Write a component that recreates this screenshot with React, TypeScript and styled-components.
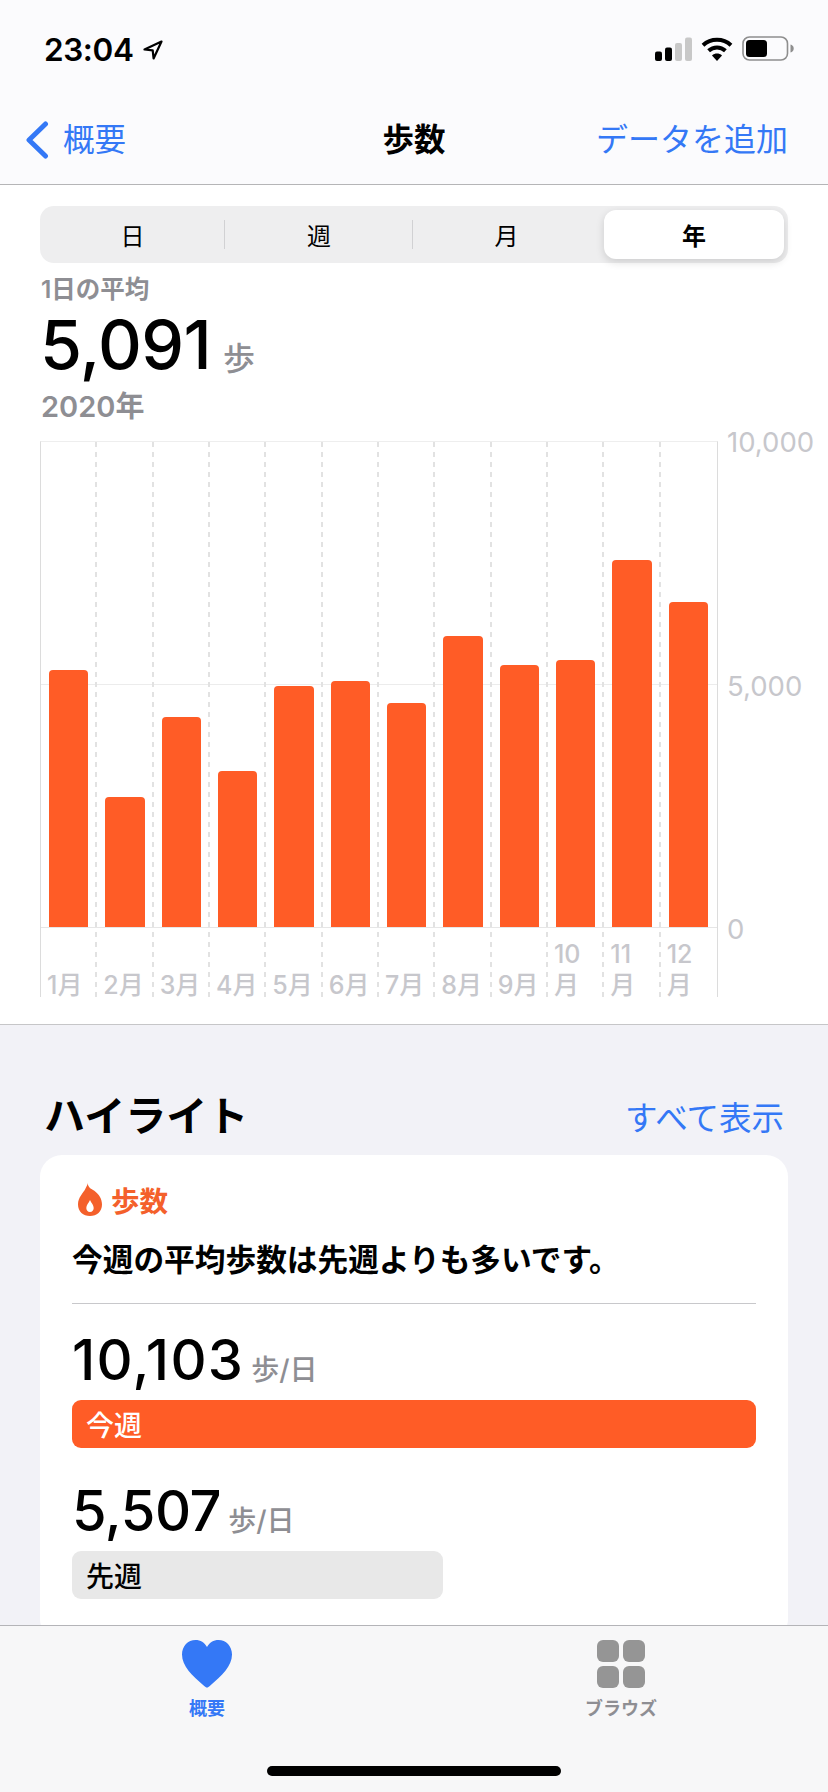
import React from "react";
import styled, { createGlobalStyle } from "styled-components";

const GlobalStyle = createGlobalStyle`
  html, body {
    margin: 0;
    padding: 0;
    background: #f2f2f7;
  }
  * {
    box-sizing: border-box;
  }
`;

const Page = styled.div`
  width: 828px;
  height: 1792px;
  display: flex;
  flex-direction: column;
  overflow: hidden;
  background: #f2f2f7;
  font-family: Inter, "Noto Sans CJK JP", sans-serif;
  color: #000;
`;

/* header */

const Header = styled.header`
  flex: none;
  height: 185px;
  background: #fbfbfd;
  border-bottom: 1px solid #b5b5b7;
`;

const StatusBar = styled.div`
  height: 100px;
  padding: 36px 34px 0 44px;
  display: flex;
  justify-content: space-between;
  align-items: flex-start;
`;

const TimeGroup = styled.div`
  display: flex;
  align-items: center;
  gap: 10px;
`;

const Time = styled.span`
  font-family: Inter, sans-serif;
  font-size: 31.5px;
  line-height: 27px;
  font-weight: 600;
  letter-spacing: -0.4px;
`;

const StatusIcons = styled.div`
  display: flex;
  align-items: center;
  gap: 9px;
`;

const NavBar = styled.nav`
  height: 84px;
  padding: 0 25px 4px;
  display: grid;
  grid-template-columns: 1fr auto 1fr;
  align-items: center;
  font-size: 31.5px;
  line-height: 44px;
`;

const BackLink = styled.div`
  display: flex;
  align-items: center;
  gap: 14px;
  color: #3478f6;
`;

const NavTitle = styled.div`
  font-weight: 700;
`;

const NavAction = styled.div`
  color: #3478f6;
  justify-self: end;
  margin-right: 15px;
  font-size: 32px;
`;

/* chart section */

const ChartSection = styled.section`
  flex: none;
  height: 840px;
  padding: 21px 0 0 40px;
  background: #fff;
  border-bottom: 1px solid #c6c6c8;
`;

const Segmented = styled.div`
  width: 748px;
  height: 57px;
  padding: 4px 4px 4px 0;
  display: grid;
  grid-template-columns: 185px 188px 187px 184px;
  background: #eeeeef;
  border-radius: 14px;
`;

const Segment = styled.div<{ $active?: boolean; $divider?: boolean }>`
  display: flex;
  align-items: center;
  justify-content: center;
  margin-left: ${(p) => (p.$active ? "4px" : "0")};
  font-size: 24px;
  font-weight: ${(p) => (p.$active ? 700 : 400)};
  background: ${(p) => (p.$active ? "#fff" : "transparent")};
  border-radius: 12px;
  box-shadow: ${(p) => (p.$active ? "0 3px 8px rgba(0, 0, 0, 0.14)" : "none")};
  position: relative;
  ${(p) =>
    p.$divider &&
    `
    &::after {
      content: "";
      position: absolute;
      right: 0;
      top: 10px;
      bottom: 10px;
      width: 1px;
      background: #d1d1d3;
    }
  `}
`;

const CaptionLabel = styled.div`
  margin: 12px 0 0 1px;
  font-size: 24.5px;
  line-height: 28px;
  font-weight: 600;
  color: #8e8e93;
`;

const AverageRow = styled.div`
  margin: 3px 0 0 0;
  height: 76px;
  display: flex;
  align-items: flex-end;
  gap: 12px;
`;

const AverageValue = styled.span`
  font-size: 68px;
  line-height: 76px;
  font-weight: 500;
  letter-spacing: -0.6px;
`;

const AverageUnit = styled.span`
  font-size: 32px;
  line-height: 46px;
  font-weight: 500;
  color: #8e8e93;
`;

const YearLabel = styled.div`
  margin: 8px 0 0 1px;
  font-size: 29px;
  line-height: 34px;
  font-weight: 600;
  color: #8e8e93;
`;

const ChartRow = styled.div`
  margin-top: 17px;
  display: flex;
`;

const Plot = styled.div`
  position: relative;
  width: 678px;
  height: 556px;
  display: grid;
  grid-template-columns: repeat(12, 1fr);
  border-left: 1px solid #dcdcdc;
  border-right: 1px solid #dcdcdc;
  border-top: 1px solid #eee;
`;

const MidLine = styled.div`
  position: absolute;
  left: 0;
  right: 0;
  top: 242px;
  height: 1px;
  background: #ececec;
`;

const Column = styled.div<{ $last?: boolean }>`
  position: relative;
  display: flex;
  flex-direction: column;
  background-image: ${(p) =>
    p.$last ? "none" : "repeating-linear-gradient(#e2e2e2 0 5px, transparent 5px 10px)"};
  background-size: 2px 100%;
  background-repeat: no-repeat;
  background-position: right top;
`;

const BarSlot = styled.div`
  height: 486px;
  padding: 0 9px 0 8px;
  display: flex;
  align-items: flex-end;
  border-bottom: 1px solid #e6e6e6;
`;

const Bar = styled.div`
  width: 100%;
  background: #ff5c26;
  border-radius: 4px 4px 0 0;
`;

const MonthSlot = styled.div`
  flex: 1;
  min-height: 0;
  padding: 0 6px;
  display: flex;
  align-items: flex-end;
  font-size: 25px;
  line-height: 31px;
  font-weight: 500;
  color: #c7c7cc;
`;

const MonthLabel = styled.span`
  margin-bottom: -4px;
`;

const Axis = styled.div`
  height: 513px;
  margin: -12px 0 0 9px;
  display: flex;
  flex-direction: column;
  justify-content: space-between;
  font-size: 27.5px;
  line-height: 26px;
  color: #c7c7cc;
`;

/* highlights */

const Scroller = styled.div`
  flex: 1;
  min-height: 0;
  overflow: hidden;
  padding: 0 40px;
`;

const HighlightHead = styled.div`
  height: 130px;
  padding: 0 4px 14px 4px;
  display: flex;
  justify-content: space-between;
  align-items: flex-end;
`;

const HighlightTitle = styled.h2`
  margin: 0;
  font-size: 41px;
  line-height: 50px;
  font-weight: 700;
`;

const ShowAll = styled.div`
  font-size: 32.5px;
  line-height: 44px;
  color: #3478f6;
`;

const Card = styled.div`
  height: 486px;
  padding: 26px 32px 0;
  background: #fff;
  border-radius: 22px;
`;

const CardTag = styled.div`
  display: flex;
  align-items: center;
  gap: 9px;
  height: 36px;
  margin-left: 6px;
  font-size: 28.5px;
  font-weight: 700;
  color: #f4602b;
`;

const CardText = styled.div`
  margin-top: 20px;
  font-size: 30.7px;
  line-height: 46px;
  font-weight: 700;
`;

const Divider = styled.div`
  height: 1px;
  margin-top: 20px;
  background: #c8c8cb;
`;

const Metric = styled.div<{ $top: number }>`
  display: flex;
  align-items: flex-end;
  gap: 7px;
  height: 58px;
  margin-top: ${(p) => p.$top}px;
`;

const MetricValue = styled.span<{ $spacing: number }>`
  font-size: 56px;
  line-height: 58px;
  font-weight: 500;
  letter-spacing: ${(p) => p.$spacing}px;
`;

const MetricUnit = styled.span`
  font-size: 28px;
  line-height: 38px;
  font-weight: 500;
  color: #8e8e93;
`;

const WeekBar = styled.div<{ $current?: boolean }>`
  height: 48px;
  margin-top: 11px;
  padding-left: 14px;
  display: flex;
  align-items: center;
  font-size: 28px;
  font-weight: 500;
  border-radius: 9px;
  background: ${(p) => (p.$current ? "#ff5c26" : "#e8e8e8")};
  color: ${(p) => (p.$current ? "#fff" : "#000")};
  width: ${(p) => (p.$current ? "100%" : "371px")};
`;

/* tab bar */

const TabBar = styled.footer`
  flex: none;
  height: 167px;
  position: relative;
  display: grid;
  grid-template-columns: 1fr 1fr;
  padding-top: 14px;
  background: #f7f7f8;
  border-top: 1px solid #b4b4b8;
`;

const Tab = styled.div<{ $active?: boolean }>`
  display: flex;
  flex-direction: column;
  align-items: center;
  gap: 9px;
  font-size: 18px;
  line-height: 24px;
  font-weight: 700;
  color: ${(p) => (p.$active ? "#3478f6" : "#8e8e93")};
`;

const GridIcon = styled.div`
  width: 48px;
  height: 48px;
  display: grid;
  grid-template-columns: 1fr 1fr;
  gap: 4px;
`;

const GridCell = styled.span`
  background: #959595;
  border-radius: 6px;
`;

const HomeIndicator = styled.div`
  position: absolute;
  left: 267px;
  bottom: 16px;
  width: 294px;
  height: 10px;
  border-radius: 5px;
  background: #000;
`;

/* icons */

const LocationArrow = () => (
  <svg width="20" height="20" viewBox="0 0 20 20" fill="none">
    <path d="M18.5 1.5 1.5 9.5l8.2.9.9 8.1z" stroke="#000" strokeWidth="2.2" strokeLinejoin="round" />
  </svg>
);

const SignalIcon = () => (
  <svg width="37" height="24" viewBox="0 0 37 24">
    <rect x="0" y="14.5" width="7" height="9.5" rx="2" fill="#000" />
    <rect x="10" y="10.5" width="7" height="13.5" rx="2" fill="#000" />
    <rect x="20" y="6" width="7" height="18" rx="2" fill="#c8c8c8" />
    <rect x="30" y="0.5" width="7" height="23.5" rx="2" fill="#c8c8c8" />
  </svg>
);

const WifiIcon = () => (
  <svg width="32" height="24" viewBox="0 0 32 24">
    <path d="M2 8.2C9.8 1 22.2 1 30 8.2" fill="none" stroke="#000" strokeWidth="4" />
    <path d="M7.6 13.8c4.8-4.4 12-4.4 16.8 0" fill="none" stroke="#000" strokeWidth="4" />
    <path d="M11 18.4c2.9-2.6 7.1-2.6 10 0L16 24z" fill="#000" />
  </svg>
);

const BatteryIcon = () => (
  <svg width="52" height="25" viewBox="0 0 52 25">
    <rect x="1" y="1" width="44.5" height="23" rx="6.5" fill="none" stroke="#8e8e8e" strokeWidth="1.6" />
    <rect x="4" y="4" width="21" height="17" rx="3.5" fill="#000" />
    <path d="M48.5 8.5c2 .5 3.2 2 3.2 4s-1.200 3.500-3.200 4z" fill="#8e8e8e" />
  </svg>
);

const BackChevron = () => (
  <svg width="24" height="38" viewBox="0 0 24 38" fill="none">
    <path d="M20.500 3 4 19l16.500 16" stroke="#3478f6" strokeWidth="5" strokeLinecap="round" strokeLinejoin="round" />
  </svg>
);

const Flame = () => (
  <svg width="24" height="33" viewBox="0 0 24 33">
    <path
      fillRule="evenodd"
      fill="#f4602b"
      d="M9.500 0c.5 4.500 4 6 6.500 7.500C21 11 24 16 24 21.500 24 28.500 18.800 33 12 33S0 28.500 0 21.500C0 14 5.500 10 7.500 5.500 8.500 3.500 9.500 2 9.500 0zM12 29c2.300 0 3.700-1.700 3.700-4 0-3-2.300-4.800-3.700-8-1.400 3.200-3.700 5-3.700 8 0 2.300 1.400 4 3.700 4z"
    />
  </svg>
);

const Heart = () => (
  <svg width="50" height="48" viewBox="0 0 50 48">
    <path
      fill="#3478f6"
      d="M25 47.500c-1 0-1.800-.6-2.800-1.500C10 35.500 0 26 0 14.500 0 6 6 0 13.500 0 18.500 0 22.500 2.500 25 7c2.500-4.500 6.500-7 11.500-7C44 0 50 6 50 14.500 50 26 40 35.500 27.800 46c-1 .9-1.800 1.500-2.800 1.500z"
    />
  </svg>
);

/* data */

const months = [
  { label: "1月", height: 257 },
  { label: "2月", height: 130 },
  { label: "3月", height: 210 },
  { label: "4月", height: 156 },
  { label: "5月", height: 241 },
  { label: "6月", height: 246 },
  { label: "7月", height: 224 },
  { label: "8月", height: 291 },
  { label: "9月", height: 262 },
  { label: "10月", height: 267 },
  { label: "11月", height: 367 },
  { label: "12月", height: 325 },
];

const segments = ["日", "週", "月", "年"];

const App: React.FC = () => {
  return (
    <Page>
      <GlobalStyle />
      <Header>
        <StatusBar>
          <TimeGroup>
            <Time>23:04</Time>
            <LocationArrow />
          </TimeGroup>
          <StatusIcons>
            <SignalIcon />
            <WifiIcon />
            <BatteryIcon />
          </StatusIcons>
        </StatusBar>
        <NavBar>
          <BackLink>
            <BackChevron />
            概要
          </BackLink>
          <NavTitle>歩数</NavTitle>
          <NavAction>データを追加</NavAction>
        </NavBar>
      </Header>

      <ChartSection>
        <Segmented>
          {segments.map((item, i) => (
            <Segment key={item} $active={i === 3} $divider={i < 2}>
              {item}
            </Segment>
          ))}
        </Segmented>
        <CaptionLabel>1日の平均</CaptionLabel>
        <AverageRow>
          <AverageValue>5,091</AverageValue>
          <AverageUnit>歩</AverageUnit>
        </AverageRow>
        <YearLabel>2020年</YearLabel>

        <ChartRow>
          <Plot>
            <MidLine />
            {months.map((m, i) => (
              <Column key={m.label} $last={i === months.length - 1}>
                <BarSlot>
                  <Bar style={{ height: m.height }} />
                </BarSlot>
                <MonthSlot>
                  <MonthLabel>{m.label}</MonthLabel>
                </MonthSlot>
              </Column>
            ))}
          </Plot>
          <Axis>
            <span>10,000</span>
            <span>5,000</span>
            <span>0</span>
          </Axis>
        </ChartRow>
      </ChartSection>

      <Scroller>
        <HighlightHead>
          <HighlightTitle>ハイライト</HighlightTitle>
          <ShowAll>すべて表示</ShowAll>
        </HighlightHead>
        <Card>
          <CardTag>
            <Flame />
            歩数
          </CardTag>
          <CardText>今週の平均歩数は先週よりも多いです。</CardText>
          <Divider />
          <Metric $top={27}>
            <MetricValue $spacing={1.3}>10,103</MetricValue>
            <MetricUnit>歩/日</MetricUnit>
          </Metric>
          <WeekBar $current>今週</WeekBar>
          <Metric $top={34}>
            <MetricValue $spacing={-0.4}>5,507</MetricValue>
            <MetricUnit>歩/日</MetricUnit>
          </Metric>
          <WeekBar>先週</WeekBar>
        </Card>
      </Scroller>

      <TabBar>
        <Tab $active>
          <Heart />
          概要
        </Tab>
        <Tab>
          <GridIcon>
            <GridCell />
            <GridCell />
            <GridCell />
            <GridCell />
          </GridIcon>
          ブラウズ
        </Tab>
        <HomeIndicator />
      </TabBar>
    </Page>
  );
};

export default App;
